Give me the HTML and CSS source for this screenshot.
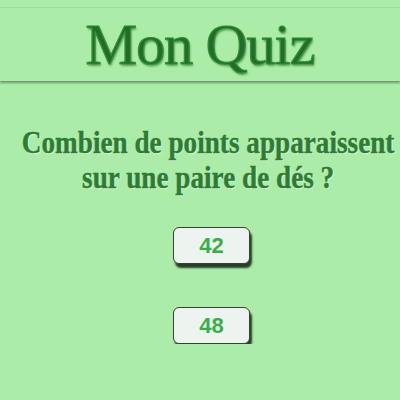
FILE: index.html
```html
<!DOCTYPE html>
<html lang="fr">
<head>
<meta charset="UTF-8">
<meta name="viewport" content="width=device-width, initial-scale=1.0">
<title>Mon Quiz</title>
<link rel="stylesheet" href="styles.css">
</head>
<body>

<div id="header">
    <h1>Mon Quiz</h1>
</div>

<div id="quiz">
    <div id="questionBox">
        <p id="question">Combien de points apparaissent<br>sur une paire de dés ?</p>
    </div>
    <div id="answers">
        <button class="answer">42</button>
        <button class="answer">48</button>
    </div>
</div>

</body>
</html>
```

FILE: styles.css
```css
body {
    margin: 0;
    background-color: rgb(170, 236, 168);
    font-family: 'Liberation Serif', 'Times New Roman', serif;
}

#header {
    margin-top: 7px;
    height: 73px;
    border-top: 1px solid rgb(158, 220, 156);
    box-shadow: 0 2px 2px rgba(0, 0, 0, 0.35);
    display: flex;
    justify-content: center;
    align-items: center;
}

h1 {
    margin: 0;
    font-size: 58px;
    font-weight: normal;
    color: rgb(36, 108, 44);
    letter-spacing: -1px;
    -webkit-text-stroke: 1.2px rgb(50, 145, 55);
    text-shadow: 0 0 1px rgb(70, 170, 70), 1px 2px 2px rgba(20, 80, 20, 0.5);
}

#quiz {
    padding-left: 16px;
}

#questionBox {
    display: flex;
    justify-content: center;
    margin-top: 44px;
}

#question {
    margin: 0;
    white-space: nowrap;
    text-align: center;
    font-size: 32px;
    line-height: 35px;
    font-weight: bold;
    color: rgb(48, 122, 52);
    -webkit-text-stroke: 0.4px rgb(48, 122, 52);
    text-shadow: 1px 1px 1px rgb(220, 250, 215);
    transform: scaleX(0.85);
}

#answers {
    display: flex;
    flex-direction: column;
    align-items: center;
    gap: 43px;
    margin-top: 32px;
    padding-left: 7px;
}

.answer {
    width: 77px;
    height: 37px;
    background-color: rgb(237, 243, 238);
    border: 1px solid rgb(55, 65, 55);
    border-radius: 6px;
    box-shadow: 2px 4px 2px rgba(20, 30, 20, 0.85);
    font-family: 'Liberation Sans', Arial, sans-serif;
    font-size: 22px;
    font-weight: bold;
    color: rgb(56, 174, 72);
}
```
